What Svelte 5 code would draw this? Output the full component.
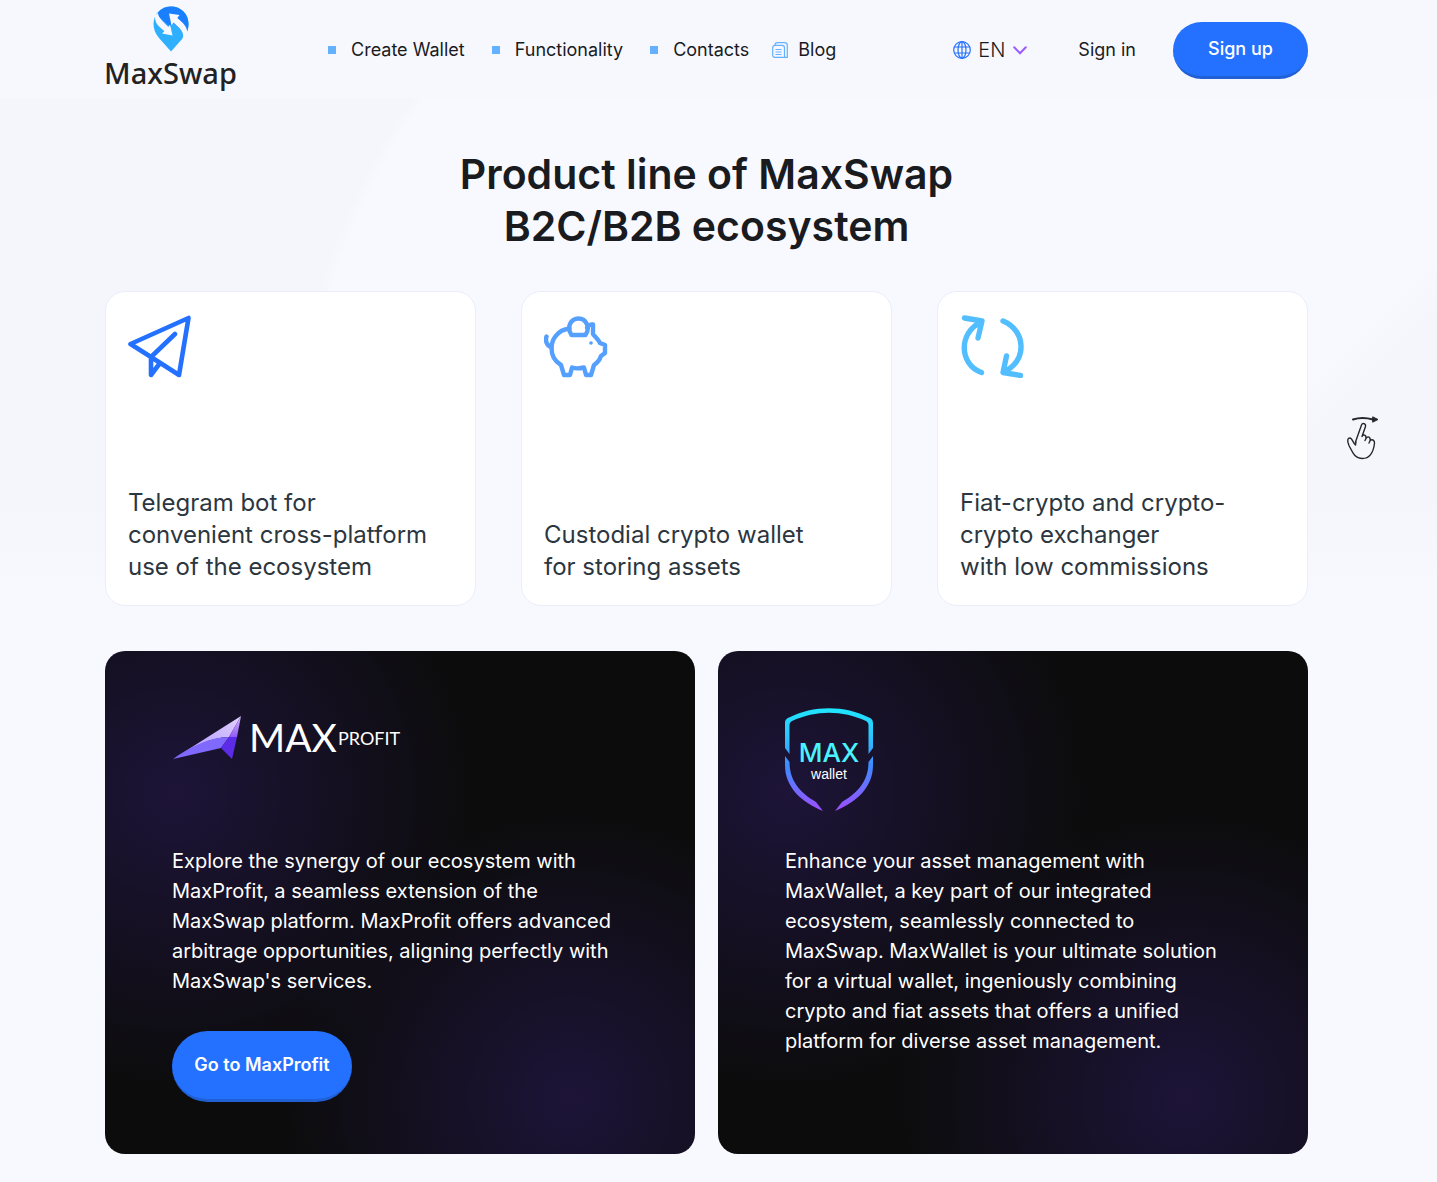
<script>
  const navItems = [
    { label: 'Create Wallet', icon: false },
    { label: 'Functionality', icon: false },
    { label: 'Contacts', icon: false },
    { label: 'Blog', icon: true }
  ];

  const products = [
    { icon: 'plane', lines: ['Telegram bot for', 'convenient cross-platform', 'use of the ecosystem'] },
    { icon: 'piggy', lines: ['Custodial crypto wallet', 'for storing assets'] },
    { icon: 'exchange', lines: ['Fiat-crypto and crypto-', 'crypto exchanger', 'with low commissions'] }
  ];

  let language = $state('EN');
</script>

<div class="page">
  <header>
    <div class="container bar">
      <a class="brand" href="#top">
        <svg width="36" height="46" viewBox="0 0 36 46" aria-hidden="true">
          <path fill="#2fb0ff" d="M18 0.500C28 0.500 35.500 8 35.500 18C35.500 23 33.500 28 30 32L18 45.500L6 32C2.500 28 0.500 23 0.500 18C0.500 8 8 0.500 18 0.500Z" />
          <path fill="#1a7fff" d="M4 9C6 4 11 0.500 18 0.500C28 0.500 35.500 8 35.500 18C35.500 22 34.500 25 33 28L20 17L17 21Z" />
          <path fill="#f7f8fe" d="M0 11L5 7C5 12 11 16 15.300 21L17 18.500L19.500 29.500L9 27.500L11.500 25C5 20 2 17 2 11Z" />
          <path fill="#f7f8fe" d="M16 7.500L26.500 9L24.300 12C30 17 34 20 34.500 27L33 31L29.500 33C32 26 27 22.500 20.500 16.500L18.500 19.500Z" />
        </svg>
        <span>MaxSwap</span>
      </a>
      <nav aria-label="Main">
        {#each navItems as item}
          <a class:with-icon={item.icon} href="#section">
            {#if item.icon}
              <svg width="16" height="16" viewBox="0 0 16 16" fill="none" stroke="#64b1ff" stroke-width="1.200" aria-hidden="true">
                <path d="M2.800 3.200C3 1.500 4 0.700 5.500 0.700H12.500C14.500 0.700 15.300 1.600 15.300 3.500V15.300H3C1.500 15.300 0.700 14.500 0.700 13V6C0.700 4.200 1.400 3.400 3 3.400H10C11.800 3.400 12.500 4.200 12.500 6V15.300M3.500 7.500H9.500M3.500 10H9.500M3.500 12.500H9.500" />
              </svg>
            {:else}
              <i></i>
            {/if}
            {item.label}
          </a>
        {/each}
      </nav>
      <div class="actions">
        <label class="language">
          <svg width="18" height="18" viewBox="0 0 18 18" fill="none" stroke="#2571ff" stroke-width="1.200" aria-hidden="true">
            <circle cx="9" cy="9" r="8.300" />
            <ellipse cx="9" cy="9" rx="4" ry="8.300" />
            <path d="M9 0.700V17.300M1.500 6H16.500M1.500 12H16.500" />
          </svg>
          <select bind:value={language} aria-label="Language">
            <option>EN</option>
            <option>DE</option>
          </select>
          <svg width="14" height="9" viewBox="0 0 14 9" fill="none" stroke="#9b5cff" stroke-width="2" stroke-linecap="round" aria-hidden="true">
            <path d="M1.200 1.200L7 7.300L12.800 1.200" />
          </svg>
        </label>
        <a class="signin" href="#signin">Sign in</a>
        <button class="button signup" type="button">Sign up</button>
      </div>
    </div>
  </header>

  <main>
    <section class="hero">
      <div class="container">
        <h1>Product line of MaxSwap<br />B2C/B2B ecosystem</h1>
        <div class="track">
          <ul class="products">
            {#each products as product}
              <li>
                {#if product.icon === 'plane'}
                  <svg width="64" height="64" viewBox="0 0 64 64" fill="none" stroke="#2571ff" stroke-width="4.600" stroke-linejoin="round" stroke-linecap="round" aria-hidden="true">
                    <path d="M2.500 30L60.500 4L51 61L23 43Z M47 20L23 43V61L32 49" />
                  </svg>
                {:else if product.icon === 'piggy'}
                  <svg width="64" height="64" viewBox="0 0 64 64" fill="none" stroke="#559fff" stroke-width="4.400" stroke-linejoin="round" stroke-linecap="round" aria-hidden="true">
                    <path d="M25.500 14.500C13 16 7.500 26 7.500 34C7.500 43 12 48 17 51L20 61H26L28 53.500C31 54.500 36 54.500 40 53.500L42 61H47L50 51C53 49 56 45 57 42L61 39V31L56 29C54 25 51 23 49 20V10.500C47 10 45 11 43 13.500" />
                    <path d="M27.500 21C22 13 27 4.500 34.500 4.500C42.500 4.500 46.500 14 41.500 21ZM7.500 33C3 32 1 27 2.500 22.500" />
                    <circle cx="47" cy="29" r="1.800" fill="#559fff" stroke="none" />
                  </svg>
                {:else}
                  <svg width="64" height="64" viewBox="0 0 64 64" fill="none" stroke="#53beff" stroke-width="5.400" stroke-linejoin="round" stroke-linecap="round" aria-hidden="true">
                    <path d="M4.500 4L22 7L18 24M21.500 8C-1.500 18 -1.500 50 21.500 58.500M43 7C67 17 67 48 43.500 58M60.500 61.500L43 58.500L46.500 42" />
                  </svg>
                {/if}
                <h2>
                  {#each product.lines as line}
                    <span>{line}</span>
                  {/each}
                </h2>
              </li>
            {/each}
          </ul>
          <svg class="swipe" width="36" height="46" viewBox="0 0 36 46" fill="none" stroke="#26262b" stroke-width="1.400" stroke-linejoin="round" stroke-linecap="round" aria-hidden="true">
            <path d="M8 4.500C14 2.500 22 2.800 28 4.500" stroke-width="2" />
            <path d="M28 2L33 4.500L28 7Z" fill="#26262b" stroke-width="1" />
            <path d="M10.500 27L16.500 10C17.500 7.500 21 8.500 20.500 11.500L17 21.500C18 19 21.500 19.500 21 23.500C22.500 20.500 26 22 25 26C26.500 23.500 30 25 29.500 28.500C28.500 36 25 43.500 17.500 43.500C9 43.500 7 36 4 30.500C1.500 25 3 23 5 23C7 23 8.500 28.500 10.500 30L11 27M21 23.500L20 25.500M25 26L24 28" />
          </svg>
        </div>
      </div>
    </section>

    <section class="container partners">
      <article>
        <svg class="logo" width="240" height="104" viewBox="0 0 240 104" role="img" aria-label="MAX Profit">
          <defs>
            <linearGradient id="wing" x1="0" y1="1" x2="1" y2="0">
              <stop offset="0" stop-color="#a58aff" />
              <stop offset="1" stop-color="#e2d2ff" />
            </linearGradient>
            <linearGradient id="tail" x1="0" y1="0" x2="0" y2="1">
              <stop offset="0" stop-color="#d8b8ff" />
              <stop offset="1" stop-color="#9259f5" />
            </linearGradient>
          </defs>
          <path fill="url(#wing)" d="M1 51L69 8L57 29C39 29 18 40 1 51Z" />
          <path fill="url(#tail)" d="M69 8L65 29H57Z" />
          <path fill="#8069ff" d="M1 51C18 39 38 29 57 29L49 40Z" />
          <path fill="#5b2be8" d="M57 29H65L60 51L49 40Z" />
          <text class="max" x="77" y="44">MAX</text>
          <text class="profit" x="166" y="37">PROFIT</text>
        </svg>
        <p>
          Explore the synergy of our ecosystem with MaxProfit, a seamless extension of the MaxSwap
          platform. MaxProfit offers advanced arbitrage opportunities, aligning perfectly with
          MaxSwap's services.
        </p>
        <button class="button goto" type="button">Go to MaxProfit</button>
      </article>
      <article>
        <svg class="logo" width="88" height="104" viewBox="0 0 88 104" role="img" aria-label="MAX wallet">
          <defs>
            <linearGradient id="shield" gradientUnits="userSpaceOnUse" x1="0" y1="0" x2="0" y2="104">
              <stop offset="0" stop-color="#1fe6ff" />
              <stop offset="0.250" stop-color="#2cc8ff" />
              <stop offset="0.550" stop-color="#3c8cff" />
              <stop offset="1" stop-color="#a04dff" />
            </linearGradient>
          </defs>
          <g fill="url(#shield)">
            <path d="M0 40V16C0 12 1 11 4 9.500C28 -3 60 -3 84 9.500C87 11 88 12 88 16V40L83.500 46V17C83.500 15 82.500 14 81 13C57 2 31 2 7 13C5.500 14 4.500 15 4.500 17V46Z" />
            <path d="M0 48L4.500 54C4.500 72 14 84 31 94L38 103C16 94 0 79 0 57Z" />
            <path d="M88 48L83.500 54C83.500 72 74 84 57 94L50 103C72 94 88 79 88 57Z" />
          </g>
          <text class="shield-name" x="44" y="54">MAX</text>
          <text class="shield-kind" x="44" y="71">wallet</text>
        </svg>
        <p>
          Enhance your asset management with MaxWallet, a key part of our integrated ecosystem,
          seamlessly connected to MaxSwap. MaxWallet is your ultimate solution for a virtual wallet,
          ingeniously combining crypto and fiat assets that offers a unified platform for diverse
          asset management.
        </p>
      </article>
    </section>
  </main>
</div>

<style>
  :global(body) {
    margin: 0;
    background: #f8f9ff;
  }

  .page {
    font-family: Inter, 'Liberation Sans', sans-serif;
    color: #1a1b1e;
  }

  .page * {
    box-sizing: border-box;
  }

  a {
    color: inherit;
    text-decoration: none;
  }

  .container {
    margin: 0 129px 0 105px;
  }

  header {
    background: #f7f8fe;
  }

  .bar {
    display: flex;
    align-items: center;
    height: 98px;
    padding-top: 2px;
  }

  .brand {
    display: flex;
    flex-direction: column;
    align-items: center;
    width: 131px;
    color: #222;
    font: 500 29px/42px 'Noto Sans', sans-serif;
  }

  nav {
    display: flex;
    gap: 27px;
    margin-left: 92px;
    font-size: 18px;
    line-height: 24px;
    white-space: nowrap;
  }

  nav a {
    display: flex;
    align-items: center;
    gap: 15px;
  }

  nav .with-icon {
    gap: 10px;
    margin-left: -4px;
  }

  nav i {
    width: 8px;
    height: 8px;
    background: #64b1ff;
  }

  .actions {
    display: flex;
    align-items: center;
    margin-left: auto;
    font-size: 18px;
    line-height: 24px;
    white-space: nowrap;
  }

  .language {
    display: flex;
    align-items: center;
    gap: 7px;
  }

  .language select {
    appearance: none;
    padding: 0;
    border: 0;
    background: none;
    color: inherit;
    font: 300 20px/24px Inter, sans-serif;
    cursor: pointer;
  }

  .signin {
    margin: 0 37px 0 51px;
  }

  .button {
    border: 0;
    border-bottom: 3px solid #205fd4;
    border-radius: 36px;
    background: #2571ff;
    color: #fff;
    font-family: inherit;
    font-size: 18px;
    line-height: 24px;
    cursor: pointer;
  }

  .signup {
    width: 135px;
    height: 57px;
    font-weight: 500;
  }

  .goto {
    width: 180px;
    height: 71px;
    font-weight: 600;
  }

  .hero {
    padding: 50px 0 45px;
    background:
      linear-gradient(to bottom, transparent 400px, #f8f9ff 500px),
      radial-gradient(circle at 1000px 400px, transparent 700px, #f4f6fc 712px),
      linear-gradient(135deg, transparent 80%, #f5f6fc 83%);
  }

  h1 {
    margin: 0 0 39px;
    font-size: 41px;
    font-weight: 600;
    line-height: 52px;
    text-align: center;
  }

  .track {
    position: relative;
  }

  .products {
    display: grid;
    grid-template-columns: repeat(3, 1fr);
    gap: 45px;
    margin: 0;
    padding: 0;
    list-style: none;
  }

  .products li {
    display: flex;
    flex-direction: column;
    justify-content: space-between;
    min-height: 315px;
    padding: 22px;
    border: 1px solid #ebedfb;
    border-radius: 20px;
    background: #fff;
  }

  h2 {
    margin: 0;
    color: #2c363f;
    font-size: 24px;
    font-weight: 400;
    line-height: 32px;
    white-space: nowrap;
  }

  h2 span {
    display: block;
  }

  .swipe {
    position: absolute;
    top: 124px;
    right: -73px;
  }

  .partners {
    display: grid;
    grid-template-columns: 1fr 1fr;
    gap: 23px;
    margin-bottom: 28px;
  }

  article {
    padding: 57px 67px 52px;
    border-radius: 20px;
    background:
      radial-gradient(circle at 12% 28%, #1d1438 0, rgba(29, 20, 56, 0) 300px),
      radial-gradient(circle at 79% 89%, #1d1438 0, rgba(29, 20, 56, 0) 290px),
      #0c0c0c;
    color: #fff;
  }

  .logo {
    display: block;
    margin-bottom: 34px;
  }

  .max {
    fill: #fff;
    font: 400 39px Lato, sans-serif;
  }

  .profit {
    fill: #fff;
    font: 400 18px Lato, sans-serif;
  }

  .shield-name {
    fill: #4af3ff;
    font: 500 26px Inter, sans-serif;
    text-anchor: middle;
  }

  .shield-kind {
    fill: #fff;
    font: 400 14px 'Liberation Sans', sans-serif;
    text-anchor: middle;
  }

  article p {
    max-width: 448px;
    margin: 0 0 35px;
    font-size: 20px;
    line-height: 30px;
  }
</style>
